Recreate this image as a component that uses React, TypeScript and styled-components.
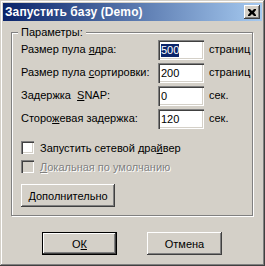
import styled, { createGlobalStyle } from "styled-components";

const GlobalStyle = createGlobalStyle`
  html, body {
    margin: 0;
    padding: 0;
    background: #d4d0c8;
  }
  * {
    box-sizing: border-box;
  }
`;

const Window = styled.div`
  width: 265px;
  height: 266px;
  padding: 3px;
  background: #d4d0c8;
  box-shadow: inset -1px -1px #404040, inset 1px 1px #d4d0c8,
    inset -2px -2px #808080, inset 2px 2px #ffffff;
  display: flex;
  flex-direction: column;
  font-family: "Liberation Sans", Arial, sans-serif;
  font-size: 11px;
  color: #000;
`;

const TitleBar = styled.div`
  height: 18px;
  display: flex;
  align-items: center;
  justify-content: space-between;
  padding: 0 2px 0 2px;
  background: linear-gradient(90deg, #0a246a, #a6caf0);
`;

const Title = styled.span`
  color: #fff;
  font-weight: bold;
  font-size: 12px;
  letter-spacing: 0.1px;
`;

const CloseButton = styled.div`
  width: 16px;
  height: 14px;
  display: flex;
  align-items: center;
  justify-content: center;
  background: #d4d0c8;
  box-shadow: inset -1px -1px #404040, inset 1px 1px #ffffff,
    inset -2px -2px #808080, inset 2px 2px #d4d0c8;
`;

const Body = styled.div`
  flex: 1;
  display: flex;
  flex-direction: column;
  padding: 11px 9px 0 8px;
`;

const Group = styled.div`
  position: relative;
  height: 184px;
  border: 1px solid #808080;
  box-shadow: inset 1px 1px #ffffff, 1px 1px #ffffff;
  padding: 7px 0 0 9px;
  display: flex;
  flex-direction: column;
`;

const Legend = styled.span`
  position: absolute;
  top: -7px;
  left: 6px;
  padding: 0 3px;
  background: #d4d0c8;
  line-height: 13px;
`;

const Fields = styled.div`
  display: grid;
  grid-template-columns: 132px 46px auto;
  grid-auto-rows: 20px;
  row-gap: 3px;
  column-gap: 5px;
  align-items: center;
`;

const Label = styled.span`
  margin-top: -3px;
  white-space: nowrap;
`;

const Unit = styled.span`
  margin-top: -3px;
`;

const Field = styled.div`
  height: 20px;
  background: #fff;
  box-shadow: inset 1px 1px #808080, inset 2px 2px #404040,
    inset -1px -1px #ffffff, inset -2px -2px #d4d0c8;
  padding: 0 3px;
  display: flex;
  align-items: center;
  line-height: 13px;
`;

const Selected = styled.span`
  background: #0a246a;
  color: #fff;
`;

const CheckRow = styled.div<{ $top: number }>`
  display: flex;
  align-items: center;
  gap: 6px;
  margin-top: ${(p) => p.$top}px;
  height: 13px;
`;

const Box = styled.div<{ $disabled?: boolean }>`
  width: 13px;
  height: 13px;
  background: ${(p) => (p.$disabled ? "#d4d0c8" : "#ffffff")};
  box-shadow: inset 1px 1px #808080, inset 2px 2px #404040,
    inset -1px -1px #ffffff, inset -2px -2px #d4d0c8;
`;

const CheckText = styled.span<{ $disabled?: boolean }>`
  color: ${(p) => (p.$disabled ? "#808080" : "#000")};
  text-shadow: ${(p) => (p.$disabled ? "1px 1px 0 #ffffff" : "none")};
`;

const Button = styled.div<{ $w: number; $default?: boolean }>`
  width: ${(p) => p.$w}px;
  height: 23px;
  display: flex;
  align-items: center;
  justify-content: center;
  background: #d4d0c8;
  box-shadow: ${(p) =>
    p.$default
      ? "inset 0 0 0 1px #000, inset -2px -2px #404040, inset 2px 2px #ffffff, inset -3px -3px #808080"
      : "inset -1px -1px #404040, inset 1px 1px #ffffff, inset -2px -2px #808080"};
`;

const MoreButton = styled(Button)`
  margin-top: 11px;
`;

const Footer = styled.div`
  display: flex;
  padding: 16px 0 0 31px;
  gap: 30px;
`;

export default function App() {
  return (
    <>
      <GlobalStyle />
      <Window>
        <TitleBar>
          <Title>Запустить базу (Demo)</Title>
          <CloseButton>
            <svg width="8" height="7" viewBox="0 0 8 7">
              <path
                d="M0 0h2l2 2 2-2h2v1L6 3.5 8 6v1H6L4 5 2 7H0V6l2-2.5L0 1z"
                fill="#000"
              />
            </svg>
          </CloseButton>
        </TitleBar>
        <Body>
          <Group>
            <Legend>Параметры:</Legend>
            <Fields>
              <Label>
                Размер пула <u>я</u>дра:
              </Label>
              <Field>
                <Selected>500</Selected>
              </Field>
              <Unit>страниц</Unit>
              <Label>
                Размер пула <u>с</u>ортировки:
              </Label>
              <Field>200</Field>
              <Unit>страниц</Unit>
              <Label>
                Задержка &nbsp;<u>S</u>NAP:
              </Label>
              <Field>0</Field>
              <Unit>сек.</Unit>
              <Label>
                Сторо<u>ж</u>евая задержка:
              </Label>
              <Field>120</Field>
              <Unit>сек.</Unit>
            </Fields>
            <CheckRow $top={12}>
              <Box />
              <CheckText>
                Запустить сетевой дра<u>й</u>вер
              </CheckText>
            </CheckRow>
            <CheckRow $top={6}>
              <Box $disabled />
              <CheckText $disabled>
                <u>Л</u>окальная по умолчанию
              </CheckText>
            </CheckRow>
            <MoreButton $w={94}>
              <span>
                <u>Д</u>ополнительно
              </span>
            </MoreButton>
          </Group>
          <Footer>
            <Button $w={75} $default>
              <span>
                О<u>К</u>
              </span>
            </Button>
            <Button $w={75}>Отмена</Button>
          </Footer>
        </Body>
      </Window>
    </>
  );
}
